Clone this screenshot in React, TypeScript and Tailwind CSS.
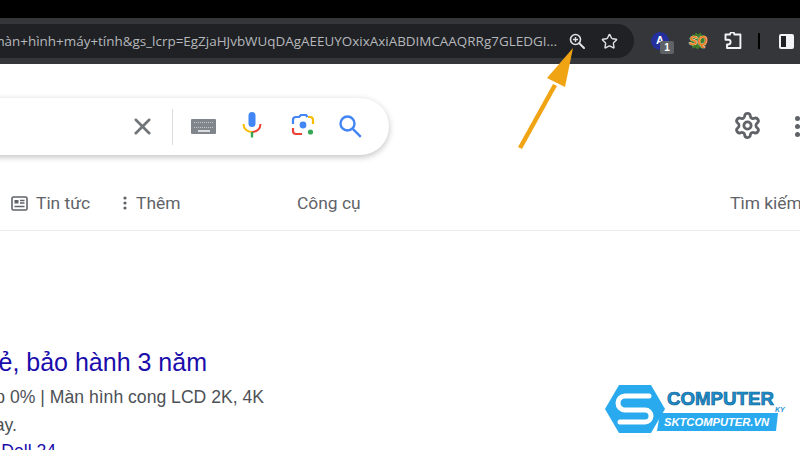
import { Settings, Star, X } from "lucide-react";

const URL_TAIL =
  "màn+hình+máy+tính&gs_lcrp=EgZjaHJvbWUqDAgAEEUYOxixAxiABDIMCAAQRRg7GLEDGI...";

function ZoomIcon() {
  return (
    <svg width="16" height="16" viewBox="0 0 16 16" fill="none" stroke="#dfe1e5" strokeWidth="1.6">
      <circle cx="6.5" cy="6.5" r="5" />
      <path d="M10.2 10.2 15 15" strokeWidth="2" strokeLinecap="round" />
      <path d="M4 6.5h5M6.5 4v5" strokeWidth="1.4" />
    </svg>
  );
}

function SqIcon() {
  return (
    <svg className="ml-[18px]" width="22" height="20" viewBox="0 0 22 20">
      <path
        d="M5 3 7 4.5 9 1.5l2 2 2.5-2 1.5 3 3-1-.5 3.5 3 2-2 2.5 1 3-3 .5-1 3-3-1.5-2 2-2-2-3 1-.5-3-3-1.5 1.5-2.5L2 7l3-.5z"
        fill="#3f7d2a"
      />
      <text x="11" y="14" textAnchor="middle" fontFamily="Liberation Sans" fontWeight="700" fontStyle="italic" fontSize="12.5" fill="#f47b1c" stroke="#fff" strokeWidth="0.6" paintOrder="stroke">
        SQ
      </text>
    </svg>
  );
}

function Toolbar() {
  return (
    <div className="flex h-[46px] items-center bg-[#35363a]">
      <div className="flex h-[34px] w-[634px] shrink-0 items-center justify-end rounded-r-full bg-[#202124] pr-[16px]">
        <div className="flex flex-1 justify-end overflow-hidden whitespace-nowrap font-['Open_Sans',sans-serif] text-[13.45px] text-[#b5b8bc]">
          {URL_TAIL}
        </div>
        <div className="ml-[12px] flex w-[16px] justify-center">
          <ZoomIcon />
        </div>
        <Star className="ml-[16px] text-[#dfe1e5]" size={17} strokeWidth={2} />
      </div>
      <div className="relative ml-[17px] h-[18px] w-[18px] rounded-full bg-[#24309b]">
        <span className="absolute left-[5px] top-[1px] font-['Liberation_Sans',sans-serif] text-[11px] font-bold leading-[14px] text-white">
          A
        </span>
        <span className="absolute left-[9px] top-[9px] flex h-[13px] w-[14px] items-center justify-center rounded-[2px] bg-[#5f6368] font-['Liberation_Sans',sans-serif] text-[10px] font-bold text-white">
          1
        </span>
      </div>
      <SqIcon />
      <svg className="ml-[15px]" width="18" height="18" viewBox="0 0 18 18" fill="none" stroke="#f1f3f4" strokeWidth="1.9" strokeLinejoin="round">
        <path d="M1.5 2.5h4.5a2.2 2.2 0 0 1 4.4 0h6v13.5H3v-3.5h1.2a2.4 2.4 0 0 0 0-4.8H1.5z" />
      </svg>
      <div className="ml-[16px] h-[16px] w-[2px] bg-black" />
      <div className="ml-[19px] flex h-[15px] w-[15px] rounded-[2px] border-2 border-[#f1f3f4] bg-[#202124]">
        <div className="ml-auto h-full w-[6px] bg-[#f1f3f4]" />
      </div>
    </div>
  );
}

function MicIcon() {
  return (
    <svg width="20" height="26" viewBox="0 0 20 26" fill="none">
      <rect x="6.5" y="0" width="7" height="15" rx="3.5" fill="#4285f4" />
      <path d="M1.5 12c0 4.8 3.6 8 8.5 8" stroke="#fbbc04" strokeWidth="2" />
      <path d="M18.5 12c0 4.8-3.6 8-8.5 8" stroke="#ea4335" strokeWidth="2" />
      <path d="M10 20v5.5" stroke="#34a853" strokeWidth="2.4" />
    </svg>
  );
}

function LensIcon() {
  return (
    <svg width="24" height="24" viewBox="0 0 24 24" fill="none" strokeWidth="2.2">
      <path d="M2 11V7a3 3 0 0 1 3-3h3l2-2h5l1.5 2" stroke="#4285f4" />
      <path d="M17 4h2a3 3 0 0 1 3 3v4" stroke="#fbbc04" />
      <path d="M2 15v3a3 3 0 0 0 3 3h6" stroke="#ea4335" />
      <circle cx="12" cy="12" r="3.4" fill="#4285f4" stroke="none" />
      <circle cx="19.5" cy="19" r="2.6" fill="#34a853" stroke="none" />
    </svg>
  );
}

function SearchRow() {
  return (
    <div className="ml-[-40px] flex h-[57px] w-[429px] shrink-0 items-center rounded-full bg-white shadow-[0_2px_6px_rgba(32,33,36,0.28)]">
      <X className="ml-[169px] text-[#70757a]" size={27} strokeWidth={2.3} />
      <div className="ml-[16px] h-[36px] w-px bg-[#dadce0]" />
      <div className="ml-[18px] grid h-[15px] w-[25px] grid-cols-1 rounded-[1px] bg-[#80868b] px-[3px] pt-[3px]">
        <div className="h-[6px] border-y border-dotted border-[#c4c7c9]" />
        <div className="mx-auto h-[2px] w-[12px] bg-[#dadce0]" />
      </div>
      <div className="mb-[3px] ml-[26px] flex w-[20px] justify-center">
        <MicIcon />
      </div>
      <div className="mb-[3px] ml-[29px] flex w-[24px] justify-center">
        <LensIcon />
      </div>
      <svg className="mb-[2px] ml-[22px]" width="26" height="26" viewBox="0 0 26 26" fill="none" stroke="#4285f4" strokeWidth="2.4">
        <circle cx="10.5" cy="10.5" r="7" />
        <path d="m15.8 15.8 8 8" />
      </svg>
    </div>
  );
}

function NewsIcon() {
  return (
    <svg width="17" height="15" viewBox="0 0 17 15" fill="none" stroke="#5f6368" strokeWidth="1.6">
      <rect x="1" y="1" width="15" height="13" rx="1.5" />
      <rect x="3.5" y="4" width="4" height="3.5" fill="#5f6368" stroke="none" />
      <path d="M9 4.5h4.5M9 7h4.5M3.5 10.5h10" strokeWidth="1.3" />
    </svg>
  );
}

function Tabs() {
  return (
    <div className="mt-[28px] flex h-[48px] items-start whitespace-nowrap border-b border-[#ebebeb] pl-[11px] pt-[8px] font-['Roboto',sans-serif] text-[17.4px] leading-[24px] text-[#5f6368]">
      <div className="flex h-[24px] w-[112px] shrink-0 items-center">
        <NewsIcon />
        <span className="ml-[8px]">Tin tức</span>
      </div>
      <div className="flex h-[24px] w-[174px] shrink-0 items-center">
        <svg width="4" height="14" viewBox="0 0 4 14" fill="#5f6368">
          <circle cx="2" cy="2" r="1.6" />
          <circle cx="2" cy="7" r="1.6" />
          <circle cx="2" cy="12" r="1.6" />
        </svg>
        <span className="ml-[9px]">Thêm</span>
      </div>
      <span className="w-[433px] shrink-0">Công cụ</span>
      <span>Tìm kiếm an toàn</span>
    </div>
  );
}

function Result() {
  return (
    <div className="mt-[117px] flex flex-col whitespace-nowrap font-['Liberation_Sans',sans-serif] text-[17.6px]">
      <div className="flex h-[30px] w-[207px] items-center justify-end text-[25px] text-[#1a0dab]">
        Màn hình giá rẻ, bảo hành 3 năm
      </div>
      <div className="mt-[5px] flex h-[28px] w-[264px] items-center justify-end text-[#4d5156]">
        Trả góp 0% | Màn hình cong LCD 2K, 4K
      </div>
      <div className="flex h-[28px] w-[17px] items-center justify-end text-[#4d5156]">ngay hôm nay.</div>
      <div className="flex h-[24px] w-[56px] items-center justify-end text-[#1a0dab]">Màn hình Dell 24</div>
    </div>
  );
}

function Watermark() {
  return (
    <svg className="absolute left-[600px] top-[380px]" width="195" height="60" viewBox="0 0 195 60">
      <path d="M5 29 19 5h32l14 24-14 24H19z" fill="#29a9ee" />
      <path
        d="M49 16H25a7 7 0 0 0 0 14h20a6 6 0 0 1 0 12H20"
        fill="none"
        stroke="#fff"
        strokeWidth="5"
        strokeLinecap="round"
      />
      <text x="67" y="25" fontFamily="Liberation Sans" fontWeight="700" fontSize="19" textLength="107" lengthAdjust="spacingAndGlyphs" fill="#1d8fd0" stroke="#0f5f8f" strokeWidth="0.7">
        COMPUTER
      </text>
      <text x="175" y="32" fontFamily="Liberation Sans" fontWeight="700" fontStyle="italic" fontSize="7" fill="#1d8fd0">
        KY
      </text>
      <path d="M60 33h118l-2 18H57z" fill="#29a9ee" />
      <text x="64" y="46" fontFamily="Liberation Sans" fontWeight="700" fontStyle="italic" fontSize="11.5" textLength="105" lengthAdjust="spacingAndGlyphs" fill="#fff">
        SKTCOMPUTER.VN
      </text>
    </svg>
  );
}

function Arrow() {
  return (
    <svg className="absolute left-[510px] top-[40px]" width="80" height="115" viewBox="0 0 80 115" fill="#f0a414">
      <path d="M10 108 45 45" stroke="#f0a414" strokeWidth="4.5" />
      <path d="M63 8 37 38l18 9z" />
    </svg>
  );
}

export default function App() {
  return (
    <div className="relative h-[450px] w-[800px] overflow-hidden bg-white">
      <div className="h-[18px] bg-black" />
      <Toolbar />
      <div className="mt-[34px] flex items-center">
        <SearchRow />
        <Settings className="mb-[2px] ml-[344px] shrink-0 text-[#5f6368]" size={29} strokeWidth={2.3} />
        <div className="ml-[33px] flex shrink-0 flex-col gap-[3px]">
          <div className="h-[5px] w-[5px] rounded-full bg-[#5f6368]" />
          <div className="h-[5px] w-[5px] rounded-full bg-[#5f6368]" />
          <div className="h-[5px] w-[5px] rounded-full bg-[#5f6368]" />
        </div>
      </div>
      <Tabs />
      <Result />
      <Arrow />
      <Watermark />
    </div>
  );
}
